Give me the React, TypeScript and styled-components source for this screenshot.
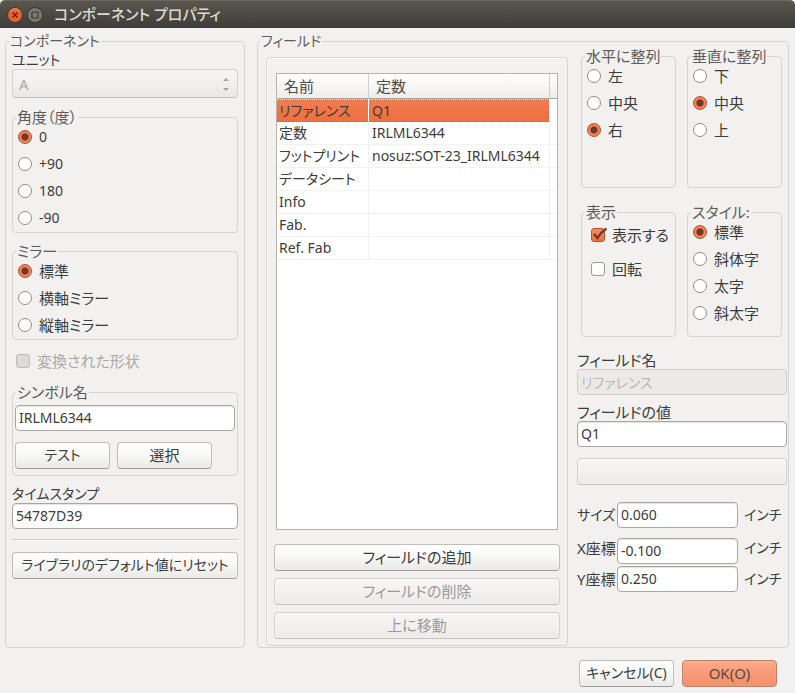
import React, { useId, useState } from "react";
import styled, { createGlobalStyle, css } from "styled-components";

const GlobalStyle = createGlobalStyle`
  * { box-sizing: border-box; }
  body {
    margin: 0;
    background: #f2f1f0;
    color: #3c3c3c;
    font: 15px/20px "Noto Sans", "Noto Sans CJK JP", sans-serif;
    font-feature-settings: "palt";
  }
  button, input, select { font: inherit; font-feature-settings: inherit; color: inherit; margin: 0; }
`;

const Window = styled.div`
  display: flex;
  flex-direction: column;
  min-height: 100vh;
`;

const TitleBar = styled.header`
  display: flex;
  align-items: center;
  gap: 4px;
  height: 28px;
  padding: 0 7px;
  border-top: 1px solid #6a675f;
  border-radius: 5px 5px 0 0;
  background: linear-gradient(#59564e, #3e3d39);
`;

const WindowButton = styled.button`
  display: block;
  width: 16px;
  height: 16px;
  padding: 0;
  border: 0;
  background: none;
  svg { display: block; }
`;

const Title = styled.h1`
  margin: 0 0 0 7px;
  padding-bottom: 2px;
  font-size: 15px;
  line-height: 20px;
  font-weight: 500;
  color: #dfdbd2;
`;

const Body = styled.main`
  flex: 1;
  display: grid;
  grid-template-columns: 240px minmax(0, 1fr);
  gap: 12px;
  padding: 6px 6px 0 5px;
`;

const Group = styled.fieldset<{ $pad?: string }>`
  display: flex;
  flex-direction: column;
  min-width: 0;
  margin: 0;
  padding: ${(p) => p.$pad ?? "0 1px"};
  border: 1px solid #d6d4d1;
  border-radius: 4px;
`;

const Legend = styled.legend<{ $indent?: number; $small?: boolean }>`
  margin-left: ${(p) => p.$indent ?? 2}px;
  padding: 0 1px;
  font-size: ${(p) => (p.$small ? 14 : 15)}px;
  line-height: 14px;
  white-space: nowrap;
  color: #5d5c5a;
`;

const FieldsGroup = styled(Group)`
  display: grid;
  grid-template-columns: minmax(0, 1fr) 210px;
  gap: 9px;
`;

const ListPanel = styled.section`
  display: flex;
  flex-direction: column;
  gap: 7px;
  margin-top: 9px;
  padding: 15px 7px 6px;
  border: 1px solid #d6d4d1;
  border-radius: 4px;
  box-shadow: inset 1px 1px #fbfbfa;
`;

const Caption = styled.label<{ $small?: boolean }>`
  display: block;
  font-size: ${(p) => (p.$small ? 14 : 15)}px;
  line-height: 20px;
  margin-bottom: -1px;
  white-space: nowrap;
`;

const Stack = styled.div<{ $top: number }>`
  display: flex;
  flex-direction: column;
  margin-top: ${(p) => p.$top}px;
`;

const TextInput = styled.input`
  width: 100%;
  min-width: 0;
  height: 26px;
  padding: 0 3px 1px;
  border: 1px solid #a9a7a3;
  border-radius: 4px;
  background: #fff;
  font-size: 14px;
  box-shadow: inset 0 1px 1px #e4e3e1;
  &:disabled {
    border-color: #cfcdca;
    background: #ebeae8;
    box-shadow: none;
    color: #bdb9b4;
  }
`;

const Button = styled.button<{ $primary?: boolean; $small?: boolean }>`
  height: 27px;
  padding: 0 2px 1px;
  border: 1px solid #c0beba;
  border-bottom-color: #9d9b97;
  border-radius: 4px;
  background: linear-gradient(#ffffff, #f8f8f7 45%, #eae9e7);
  box-shadow: inset 0 0 2px #fff;
  text-align: center;
  font-size: ${(p) => (p.$small ? 14 : 15)}px;
  line-height: 20px;
  white-space: nowrap;
  ${(p) =>
    p.$primary &&
    css`
      border-color: #bd8069;
      background: linear-gradient(#fcab8c, #f79a78 50%, #f4916b);
      box-shadow: inset 0 0 1px #ffd0bd;
      color: #5b4a42;
    `}
  &:disabled {
    border-color: #d3d1ce;
    border-bottom-color: #c3c1be;
    background: linear-gradient(#f7f6f5, #f3f2f1 45%, #ebeae9);
    color: #9c9a97;
  }
`;

const ButtonPair = styled.div`
  display: grid;
  grid-template-columns: 95px 95px;
  gap: 7px;
  margin-top: 11px;
`;

const SelectBox = styled.div`
  display: grid;
  grid-template-columns: minmax(0, 1fr) 16px;
  align-items: center;
  select {
    grid-area: 1 / 1 / 2 / 3;
    height: 29px;
    padding: 0 6px;
    appearance: none;
    border: 1px solid #d3d1ce;
    border-bottom-color: #c3c1be;
    border-radius: 4px;
    background: linear-gradient(#f6f5f4, #f1f0ef 50%, #e9e8e6);
    color: #aaa8a5;
    opacity: 1;
  }
  svg { grid-area: 1 / 2; z-index: 1; pointer-events: none; }
`;

const Choice = styled.label<{ $height: number; $disabled?: boolean }>`
  display: flex;
  align-items: center;
  gap: 7px;
  height: ${(p) => p.$height}px;
  padding: 0 0 2px 4px;
  white-space: nowrap;
  ${(p) => p.$disabled && "color: #aaa8a5;"}
`;

const NumberText = styled.span`
  font-size: 14px;
`;

const RadioInput = styled.input`
  flex: none;
  width: 14px;
  height: 14px;
  appearance: none;
  border: 1px solid #8f8d89;
  border-radius: 50%;
  background: #fff;
  &:checked {
    border-color: #b5512c;
    background: radial-gradient(circle, #71392a 0 3px, #f0764a 4px, #f58a62 5px, #e8683b 7px);
  }
`;

const CheckHolder = styled.span`
  display: grid;
  flex: none;
  width: 14px;
  height: 14px;
  input {
    grid-area: 1 / 1;
    width: 14px;
    height: 14px;
    appearance: none;
    border: 1px solid #9b9995;
    border-radius: 3px;
    background: #fff;
  }
  input:checked { border-color: #b5512c; background: linear-gradient(#f58a62, #ee7044); }
  input:disabled { border-color: #bdbbb8; background: #dddbd9; }
  svg { grid-area: 1 / 1; z-index: 1; pointer-events: none; visibility: hidden; overflow: visible; }
  input:checked + svg { visibility: visible; }
`;

const Separator = styled.hr`
  width: 100%;
  margin: 10px 0 11px;
  border: 0;
  border-top: 1px solid #d0cecb;
  border-bottom: 1px solid #fbfbfa;
`;

const ListFrame = styled.div`
  flex: 1;
  margin: 0 2px 7px;
  border: 1px solid #b5b3ae;
  background: #fff;
  overflow: hidden;
`;

const FieldTable = styled.table`
  width: 100%;
  table-layout: fixed;
  border-collapse: separate;
  border-spacing: 0;
`;

const HeadCell = styled.th`
  height: 25px;
  padding: 0 7px;
  border-right: 1px solid #d0cecb;
  border-bottom: 1px solid #a9a7a3;
  background: linear-gradient(#ffffff, #f8f8f7 40%, #eeedeb);
  font-weight: 400;
  text-align: left;
  color: #4c4c4c;
  &:last-child { border-right: 0; }
`;

const Row = styled.tr<{ $selected: boolean }>`
  td {
    height: 23px;
    padding: 0 3px;
    border-right: 1px solid #f2f2f2;
    border-bottom: 1px solid #f2f2f2;
    font-size: 14px;
    line-height: 18px;
    white-space: nowrap;
  }
  td:first-child { padding: 0 2px; }
  td:last-child { border-right: 0; }
  ${(p) =>
    p.$selected &&
    css`
      td:not(:last-child) {
        border-top: 1px dotted #fbe0d5;
        border-bottom: 1px dotted #c9623c;
        border-right-color: #fff;
        background: linear-gradient(#f37c50, #ec6f40);
        line-height: 16px;
      }
    `}
`;

const Properties = styled.section`
  display: flex;
  flex-direction: column;
  padding-top: 1px;
`;

const GroupGrid = styled.div`
  display: grid;
  grid-template-columns: 95px 95px;
  grid-template-rows: 139px 132px;
  gap: 17px 11px;
  padding-left: 4px;
`;

const Measure = styled.div<{ $top: number; $align?: string }>`
  display: grid;
  grid-template-columns: 40px minmax(0, 1fr) 49px;
  align-items: ${(p) => p.$align ?? "center"};
  margin-top: ${(p) => p.$top}px;
  white-space: nowrap;
  span { padding-left: 6px; font-size: 14px; }
`;

const MeasureLabel = styled.label<{ $small?: boolean }>`
  font-size: ${(p) => (p.$small ? 14 : 15)}px;
`;

const Footer = styled.footer`
  display: grid;
  grid-template-columns: 95px 95px;
  justify-content: end;
  gap: 8px;
  padding: 12px 18px 6px;
`;

function RadioGroup({ legend, options, initial }: { legend: string; options: string[]; initial: number }) {
  const name = useId();
  return (
    <Group>
      <Legend>{legend}</Legend>
      {options.map((text, i) => (
        <Choice key={text} $height={27}>
          <RadioInput type="radio" name={name} defaultChecked={i === initial} />
          {/^[-+\d]+$/.test(text) ? <NumberText>{text}</NumberText> : text}
        </Choice>
      ))}
    </Group>
  );
}

function Check({ text, height, checked, disabled }: { text: string; height: number; checked?: boolean; disabled?: boolean }) {
  return (
    <Choice $height={height} $disabled={disabled}>
      <CheckHolder>
        <input type="checkbox" defaultChecked={checked} disabled={disabled} />
        <svg width="16" height="14" viewBox="0 0 16 14" fill="none">
          <path d="M3 6 6.5 10C8.5 6.5 11 3.5 15.5.5" stroke="#71392a" strokeWidth="2.4" />
        </svg>
      </CheckHolder>
      {text}
    </Choice>
  );
}

function Entry({ label, value, top, small, disabled }: { label: string; value: string; top: number; small?: boolean; disabled?: boolean }) {
  const id = useId();
  return (
    <Stack $top={top}>
      <Caption htmlFor={id} $small={small}>{label}</Caption>
      <TextInput id={id} defaultValue={value} disabled={disabled} />
    </Stack>
  );
}

function MeasureEntry({ label, value, top, small, align }: { label: string; value: string; top: number; small?: boolean; align?: string }) {
  const id = useId();
  return (
    <Measure $top={top} $align={align}>
      <MeasureLabel htmlFor={id} $small={small}>{label}</MeasureLabel>
      <TextInput id={id} defaultValue={value} />
      <span>インチ</span>
    </Measure>
  );
}

const ROWS: [string, string][] = [
  ["リファレンス", "Q1"],
  ["定数", "IRLML6344"],
  ["フットプリント", "nosuz:SOT-23_IRLML6344"],
  ["データシート", ""],
  ["Info", ""],
  ["Fab.", ""],
  ["Ref. Fab", ""],
];

export default function App() {
  const [selected, setSelected] = useState(0);
  return (
    <Window>
      <GlobalStyle />
      <TitleBar>
        <WindowButton type="button" aria-label="閉じる">
          <svg width="16" height="16" viewBox="0 0 16 16">
            <circle cx="8" cy="8" r="7.5" fill="#ee5f30" stroke="#39362f" />
            <path d="M2.5 5A6.3 6.3 0 0 1 13.5 5" fill="none" stroke="#f8936f" />
            <path d="m5.5 5.5 5 5m0-5-5 5" stroke="#4b2518" strokeWidth="1.3" />
          </svg>
        </WindowButton>
        <WindowButton type="button" aria-label="最大化">
          <svg width="16" height="16" viewBox="0 0 16 16">
            <circle cx="8" cy="8" r="7.5" fill="#7d7a72" stroke="#39362f" />
            <path d="M5 5h6v6H5z" fill="none" stroke="#39362f" strokeWidth="1.2" />
          </svg>
        </WindowButton>
        <Title>コンポーネント プロパティ</Title>
      </TitleBar>

      <Body>
        <Group $pad="0 6px">
          <Legend $indent={-3} $small>コンポーネント</Legend>
          <Stack $top={2}>
            <Caption htmlFor="unit" $small>ユニット</Caption>
            <SelectBox>
              <select id="unit" disabled>
                <option>A</option>
              </select>
              <svg width="8" height="16" viewBox="0 0 8 16" fill="#a5a3a0">
                <path d="M1 5 4 2l3 3zM1 12h6l-3 3z" />
              </svg>
            </SelectBox>
          </Stack>
          <Stack $top={12}>
            <RadioGroup legend="角度（度）" options={["0", "+90", "180", "-90"]} initial={0} />
          </Stack>
          <Stack $top={11}>
            <RadioGroup legend="ミラー" options={["標準", "横軸ミラー", "縦軸ミラー"]} initial={0} />
          </Stack>
          <Stack $top={11}>
            <Check text="変換された形状" height={22} disabled />
          </Stack>
          <Stack $top={12}>
            <Group $pad="6px 2px">
              <Legend $indent={1}>シンボル名</Legend>
              <TextInput aria-label="シンボル名" defaultValue="IRLML6344" />
              <ButtonPair>
                <Button type="button" $small>テスト</Button>
                <Button type="button">選択</Button>
              </ButtonPair>
            </Group>
          </Stack>
          <Entry label="タイムスタンプ" value="54787D39" top={8} small />
          <Separator />
          <Button type="button" $small>ライブラリのデフォルト値にリセット</Button>
        </Group>

        <FieldsGroup $pad="0 1px 1px 8px">
          <Legend $indent={-6} $small>フィールド</Legend>
          <ListPanel>
            <ListFrame>
              <FieldTable>
                <colgroup>
                  <col width="92" />
                  <col />
                  <col width="7" />
                </colgroup>
                <thead>
                  <tr>
                    <HeadCell>名前</HeadCell>
                    <HeadCell>定数</HeadCell>
                    <HeadCell aria-hidden="true" />
                  </tr>
                </thead>
                <tbody>
                  {ROWS.map(([name, value], i) => (
                    <Row key={name} $selected={i === selected} onClick={() => setSelected(i)}>
                      <td>{name}</td>
                      <td>{value}</td>
                      <td />
                    </Row>
                  ))}
                </tbody>
              </FieldTable>
            </ListFrame>
            <Button type="button">フィールドの追加</Button>
            <Button type="button" disabled>フィールドの削除</Button>
            <Button type="button" disabled>上に移動</Button>
          </ListPanel>

          <Properties>
            <GroupGrid>
              <RadioGroup legend="水平に整列" options={["左", "中央", "右"]} initial={2} />
              <RadioGroup legend="垂直に整列" options={["下", "中央", "上"]} initial={1} />
              <Group $pad="0 5px">
                <Legend $indent={-2}>表示</Legend>
                <Check text="表示する" height={34} checked />
                <Check text="回転" height={34} />
              </Group>
              <RadioGroup legend="スタイル:" options={["標準", "斜体字", "太字", "斜太字"]} initial={0} />
            </GroupGrid>
            <Entry label="フィールド名" value="リファレンス" top={13} disabled />
            <Entry label="フィールドの値" value="Q1" top={7} />
            <Stack $top={11}>
              <Button type="button" disabled aria-label="データシートを表示" />
            </Stack>
            <MeasureEntry label="サイズ" value="0.060" top={17} small />
            <MeasureEntry label="X座標" value="-0.100" top={10} align="start" />
            <MeasureEntry label="Y座標" value="0.250" top={2} />
          </Properties>
        </FieldsGroup>
      </Body>

      <Footer>
        <Button type="button" $small>キャンセル(C)</Button>
        <Button type="button" $primary>OK(O)</Button>
      </Footer>
    </Window>
  );
}
